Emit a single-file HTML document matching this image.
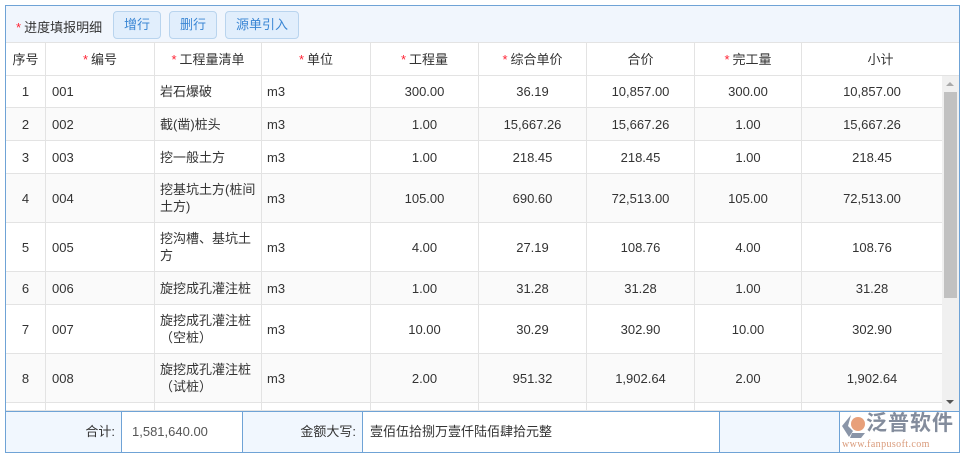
<!DOCTYPE html>
<html><head><meta charset="utf-8"><style>
*{margin:0;padding:0;box-sizing:border-box}
body{width:967px;height:459px;background:#fff;font-family:"Liberation Sans","Noto Sans CJK SC",sans-serif;font-size:13px;color:#333;position:relative;overflow:hidden}
.a{position:absolute}
.frame{left:5px;top:5px;width:955px;height:448px;border:1px solid #6fa3d6}
.bar{left:6px;top:6px;width:953px;height:37px;background:#f1f6fd;border-bottom:1px solid #e3e3e3}
.btn{top:11px;height:28px;border:1px solid #b9d4ee;background:#e1eefc;border-radius:4px;color:#3a86d4;font-size:13px;line-height:26px;text-align:center}
.st{color:#f23;margin-right:3px}
.c{position:absolute;border-right:1px solid #e3e3e3;border-bottom:1px solid #e3e3e3;display:flex;align-items:center;padding:0 6px;line-height:17px}
.ctr{justify-content:center;text-align:center}
.ev{background:#fafafa}
</style></head><body>
<div class="a frame"></div>
<div class="a bar"></div>
<div class="a" style="left:16px;top:17px;font-size:13px"><span class="st">*</span>进度填报明细</div>
<div class="a btn" style="left:113px;width:48px">增行</div>
<div class="a btn" style="left:169px;width:48px">删行</div>
<div class="a btn" style="left:225px;width:74px">源单引入</div>
<div id="t"></div>
<div class="a" style="left:942px;top:76px;width:17px;height:335px;background:#f0f0f0"></div>
<div class="a" style="left:944px;top:92px;width:13px;height:206px;background:#c1c1c1"></div>
<div class="a" style="left:946px;top:82px;width:0;height:0;border-left:4px solid transparent;border-right:4px solid transparent;border-bottom:4px solid #aaa"></div>
<div class="a" style="left:946px;top:400px;width:0;height:0;border-left:4px solid transparent;border-right:4px solid transparent;border-top:4px solid #555"></div>
<!-- footer -->
<div class="a" style="left:6px;top:411px;width:953px;height:41px;border-top:1px solid #6fa3d6"></div>
<div class="a" style="left:6px;top:412px;width:116px;height:40px;background:#f1f7fe;border-right:1px solid #6fa3d6;text-align:right;padding-right:6px;line-height:40px">合计:</div>
<div class="a" style="left:122px;top:412px;width:121px;height:40px;border-right:1px solid #6fa3d6;padding-left:10px;line-height:40px;color:#555">1,581,640.00</div>
<div class="a" style="left:243px;top:412px;width:120px;height:40px;background:#f1f7fe;border-right:1px solid #6fa3d6;text-align:right;padding-right:6px;line-height:40px">金额大写:</div>
<div class="a" style="left:363px;top:412px;width:357px;height:40px;border-right:1px solid #6fa3d6;padding-left:7px;line-height:40px">壹佰伍拾捌万壹仟陆佰肆拾元整</div>
<div class="a" style="left:720px;top:412px;width:120px;height:40px;background:#f1f7fe;border-right:1px solid #6fa3d6"></div>
<svg class="a" style="left:839px;top:413px" width="28" height="26" viewBox="0 0 28 26"><path d="M12 2 L3 13 L10 24 L14 18 L9 13 Z" fill="#8a95a8"/><circle cx="19" cy="11" r="7" fill="#e8a07a"/><path d="M13 20 L26 20 L22 25 L11 25Z" fill="#8a95a8"/></svg>
<div class="a" style="left:866px;top:411px;font-size:21px;font-weight:bold;color:#838c9c;letter-spacing:1px;line-height:26px">泛普软件</div>
<div class="a" style="left:842px;top:439px;font-size:10px;color:#d99a7a;font-family:'Liberation Serif',serif;line-height:12px;letter-spacing:.4px">www.fanpusoft.com</div>
<script>
var cols=[5,46,155,262,371,479,587,695,802,943];
var hd=["序号","*编号","*工程量清单","*单位","*工程量","*综合单价","合价","*完工量","小计"];
var rows=[
["1","001","岩石爆破","m3","300.00","36.19","10,857.00","300.00","10,857.00"],
["2","002","截(凿)桩头","m3","1.00","15,667.26","15,667.26","1.00","15,667.26"],
["3","003","挖一般土方","m3","1.00","218.45","218.45","1.00","218.45"],
["4","004","挖基坑土方(桩间土方)","m3","105.00","690.60","72,513.00","105.00","72,513.00"],
["5","005","挖沟槽、基坑土方","m3","4.00","27.19","108.76","4.00","108.76"],
["6","006","旋挖成孔灌注桩","m3","1.00","31.28","31.28","1.00","31.28"],
["7","007","旋挖成孔灌注桩（空桩）","m3","10.00","30.29","302.90","10.00","302.90"],
["8","008","旋挖成孔灌注桩（试桩）","m3","2.00","951.32","1,902.64","2.00","1,902.64"],
["","","","","","","","",""]];
var ys=[76,108,141,174,223,272,305,354,403,419];
var h="";
for(var i=0;i<9;i++){var x=cols[i]+(i==0?1:0),w=(i==8?959:cols[i+1])-x;var s=hd[i];
if(s[0]=="*")s='<span class="st">*</span>'+s.slice(1);
h+='<div class="c ctr" style="left:'+x+'px;top:43px;width:'+w+'px;height:33px;'+(i==8?'border-right:none;':'')+'">'+s+'</div>';}
for(var r=0;r<rows.length;r++){for(var i=0;i<9;i++){var x=cols[i]+(i==0?1:0),w=cols[i+1]-x;
var ctr=(i==0||i>=4);var t=rows[r][i];
h+='<div class="c'+(ctr?' ctr':'')+(r%2==1?' ev':'')+'" style="left:'+x+'px;top:'+ys[r]+'px;width:'+w+'px;height:'+(Math.min(ys[r+1],411)-ys[r])+'px;'+(i>=2&&i<=3?'padding-left:5px;padding-right:1px;':'')+'">'+t+'</div>';}}
document.getElementById("t").innerHTML=h;
</script>
</body></html>
